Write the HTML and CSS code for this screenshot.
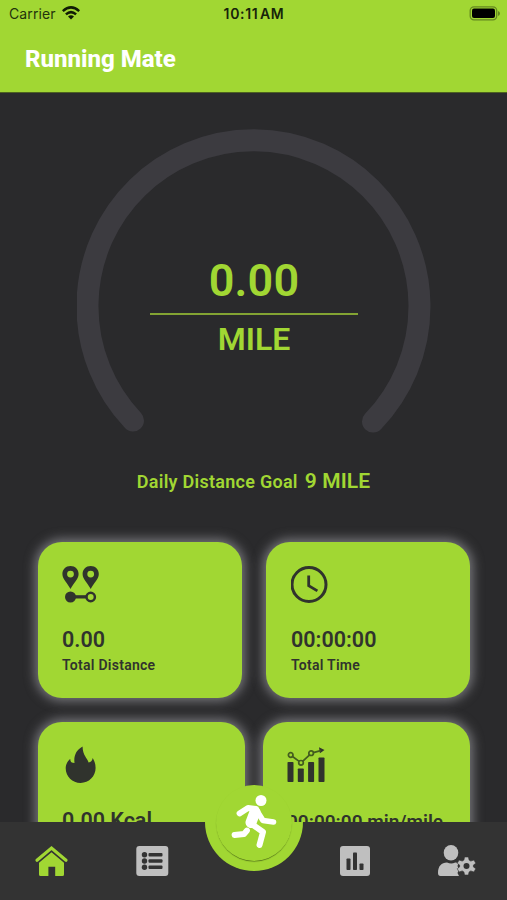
FILE: index.html
```
<!DOCTYPE html>
<html lang="en">
<head>
<meta charset="utf-8">
<title>Running Mate</title>
<link rel="stylesheet" href="styles.css">
</head>
<body>
<div class="app">
  <header class="header">
    <div class="status">
      <div class="carrier"><span>Carrier</span>
        <svg class="wifi" viewBox="0 0 18 14"><g fill="none" stroke="#111d05" stroke-width="2.5"><path d="M.8 5.2Q9-2.500 17.2 5.2"/><path d="M3.9 8.4Q9 3.8 14.1 8.4"/></g><path d="M6 10.5Q9 8 12 10.5L9 13.6Z" fill="#111d05"/></svg>
      </div>
      <div class="clock">10:11 AM</div>
      <svg class="battery" viewBox="0 0 32 15"><rect x="1.2" y=".8" width="26.5" height="13" rx="3.8" fill="none" stroke="#658820" stroke-width="1.3"/><rect x="3" y="2.6" width="23" height="9.4" rx="2" fill="#000"/><path d="M29 5v5q2-.8 2-2.500T29 5Z" fill="#658820"/></svg>
    </div>
    <h1 class="title">Running Mate</h1>
  </header>

  <main class="main">
    <section class="gauge">
      <svg class="arc" viewBox="0 0 356 306"><path d="M56 292.500A166 166 0 1 1 296 293.500" fill="none" stroke="#3c3b40" stroke-width="22" stroke-linecap="round"/></svg>
      <div class="reading">
        <div class="amount">0.00</div>
        <div class="rule"></div>
        <div class="unit">MILE</div>
      </div>
    </section>
    <div class="goal"><span>Daily Distance Goal</span><strong>9 MILE</strong></div>
    <section class="row">
      <article class="card">
        <svg class="icon" viewBox="0 0 38 38"><g fill="#30332d" fill-rule="evenodd"><path d="M8.500 1C3.800 1 .4 4.500.4 8.900c0 5.300 5.200 9 8.100 15.100 2.900-6.100 8.100-9.800 8.100-15.100C16.600 4.500 13.200 1 8.500 1Zm0 4.700a3.400 3.400 0 1 1 0 6.800 3.400 3.400 0 0 1 0-6.800Z"/><path d="M28.700 1c-4.700 0-8.100 3.500-8.100 7.900 0 5.300 5.200 9 8.100 15.100 2.900-6.100 8.100-9.800 8.100-15.100C36.800 4.500 33.400 1 28.700 1Zm0 4.700a3.400 3.400 0 1 1 0 6.800 3.400 3.400 0 0 1 0-6.800Z"/><circle cx="8.500" cy="32" r="5.500"/><path d="M12 30.200h12v3.300H12z"/></g><circle cx="28.700" cy="32" r="4.200" fill="none" stroke="#30332d" stroke-width="2.500"/></svg>
        <div class="value">0.00</div><div class="label">Total Distance</div>
      </article>
      <article class="card card-time">
        <svg class="icon" viewBox="0 0 38 38"><g fill="none" stroke="#30332d"><circle cx="18" cy="19.500" r="17" stroke-width="3"/><path d="M17.700 10.500v10.200l8.700 5.200" stroke-width="2.800"/></g></svg>
        <div class="value">00:00:00</div><div class="label">Total Time</div>
      </article>
    </section>
    <section class="row row-wide">
      <article class="card">
        <svg class="icon" viewBox="0 0 38 38"><path d="M20.600 1.500C14.500 4.700 11.500 10.500 12.500 18 9.600 18 8 16.500 8.300 13.800 5.200 16.500 3.700 20 3.700 23.200c0 8.200 6.700 14.700 14.900 14.700s15-6.500 15-14.900c0-4.300-1.400-7.600-3-10.100.1 2.300-1.500 4.400-4 4.500-1.400-4.500-6.100-7.500-6-15.900Z" fill="#30332d"/></svg>
        <div class="value kcal">0.00 Kcal</div><div class="label">Total Calories</div>
      </article>
      <article class="card">
        <svg class="icon" viewBox="0 0 38 38"><g fill="#30332d" transform="translate(.5 1)"><rect x="0" y="16" width="6" height="20" rx=".8"/><rect x="10.300" y="22.500" width="6" height="13.500" rx=".8"/><rect x="20.600" y="16" width="6" height="20" rx=".8"/><rect x="31" y="11.500" width="6" height="24.500" rx=".8"/><path d="m31.500 1.300 5.500 2.700-4.600 3.300Z"/></g><g fill="none" stroke="#435c1f" stroke-width="1.700" transform="translate(.5 1)"><circle cx="3.200" cy="9" r="2.300"/><circle cx="13.500" cy="16.800" r="2.300"/><circle cx="23.600" cy="7.200" r="2.300"/><path d="m5 10.500 6.700 4.900m3.400-.1 7-6.500m3.700-2.200 7.400-2"/></g></svg>
        <div class="value pace">00:00:00 min/mile</div><div class="label">Avg. Pace</div>
      </article>
    </section>
  </main>

  <nav class="nav">
    <svg class="nav-icon" viewBox="0 0 40 36"><path d="M6 17.300 20.500 5 35 17.300" fill="none" stroke="#a1d733" stroke-width="3.200" stroke-linecap="round"/><path d="M20.500 9.300 33 19.800v11.700q0 1.500-1.500 1.500h-7.300v-9.200h-6.800V33H9.500Q8 33 8 31.500V19.800Z" fill="#a1d733"/></svg>
    <svg class="nav-icon" viewBox="0 0 40 36"><rect x="3.300" y="3" width="32" height="30" rx="3" fill="#bfbfbf"/><g fill="#333"><circle cx="11.500" cy="11.700" r="2.700"/><circle cx="11.500" cy="18" r="2.700"/><circle cx="11.500" cy="24.300" r="2.700"/><rect x="15.500" y="10" width="14" height="3.400" rx="1"/><rect x="15.500" y="16.300" width="14" height="3.400" rx="1"/><rect x="15.500" y="22.600" width="14" height="3.400" rx="1"/></g></svg>
    <div class="run-slot"><div class="run-rim"></div><div class="run-button">
      <svg class="runner" viewBox="0 0 50 56"><circle cx="32" cy="6.500" r="5.500" fill="#fff"/><g fill="none" stroke="#fff" stroke-linecap="round" stroke-linejoin="round"><path d="M10.500 19.500 19 14 27 15" stroke-width="5.800"/><path d="m28 17 6 9.500L44.500 28" stroke-width="5.600"/><path d="m26 18-4 10.500" stroke-width="11"/><path d="m22 29.500 12 8.500-3.500 13" stroke-width="6"/><path d="m18 36.500-3 3.500-9.500 1" stroke-width="5.800"/></g></svg>
    </div></div>
    <svg class="nav-icon" viewBox="0 0 40 36"><rect x="6" y="3" width="30" height="30" rx="3" fill="#bfbfbf"/><g fill="#333"><rect x="12.500" y="15.500" width="4" height="11.500" rx=".8"/><rect x="19" y="9.500" width="4" height="17.500" rx=".8"/><rect x="25.500" y="20.500" width="4" height="6.500" rx=".8"/></g></svg>
    <svg class="nav-icon" viewBox="0 0 40 36"><g fill="#bfbfbf"><ellipse cx="15" cy="9.800" rx="7.300" ry="7.800"/><path d="M2 30c0-7 3.500-10.500 9-10.500 3 1.300 5.500 1.300 8.300 0l3.200.6-1 3 1.500 3.500-1.500 3.300 1.500 3H4.500Q2 32.900 2 30Z"/></g><g transform="translate(30.500 23)"><path d="M-1.900-9h3.800l.7 3.100 1.700 1L7.400-6l1.900 3.300L6.900-.9v1.800l2.400 1.800L7.400 6l-3.100-1.100-1.700 1L1.900 9h-3.800l-.7-3.100-1.700-1L-7.400 6l-1.900-3.300 2.400-1.800V-.9l-2.400-1.800L-7.400-6l3.100 1.100 1.700-1Z" fill="#bfbfbf" stroke="#333" stroke-width=".6"/><circle r="3" fill="#333"/></g></svg>
  </nav>
</div>
</body>
</html>
```

FILE: styles.css
```
* { box-sizing: border-box; }
body { margin: 0; background: #2a2a2c; font-family: Roboto, "Liberation Sans", sans-serif; }
.app { position: relative; width: 507px; height: 900px; overflow: hidden; display: flex; flex-direction: column; }
svg { display: block; flex: none; }

.header { height: 93px; flex: none; background: #a1d733; border-bottom: 1px solid #4d6220; }
.status { height: 27px; display: grid; grid-template-columns: 1fr auto 1fr; align-items: center; padding: 1px 6px 0 9px; font-family: Inter, sans-serif; color: #23330c; }
.carrier { display: flex; align-items: center; gap: 6px; font-size: 14px; letter-spacing: 0.1px; }
.carrier span { margin-top: -1px; }
.wifi { width: 18px; height: 14px; margin-top: -2px; }
.clock { margin: -1px 0 0 -2px; font-size: 14px; font-weight: 600; color: #17240a; word-spacing: -2.5px; letter-spacing: 0.65px; }
.battery { width: 32px; height: 15px; justify-self: end; margin-top: -1px; }
.title { margin: 17px 0 0 25px; font-size: 24px; line-height: 30px; font-weight: 800; color: #fff; }

.main { flex: 1; }
.gauge { width: 356px; height: 306px; margin: 35px auto 0; display: grid; justify-items: center; padding-left: 1px; }
.arc { grid-area: 1 / 1; width: 356px; height: 306px; }
.reading { grid-area: 1 / 1; width: 208px; margin-right: 1px; padding-top: 125px; color: #a1d733; text-align: center; font-weight: 600; }
.amount { height: 60px; font-size: 45px; line-height: 56px; letter-spacing: 0.2px; }
.rule { height: 2px; background: #83a333; }
.unit { font-size: 32px; line-height: 48px; }
.goal { display: flex; justify-content: center; align-items: center; gap: 7px; height: 30px; margin-top: 32px; color: #a1d733; font-size: 18px; font-weight: 600; letter-spacing: 0.27px; }
.goal strong { font-size: 21px; font-weight: 600; letter-spacing: 0.1px; }

.row { display: grid; grid-template-columns: repeat(2, minmax(0, 1fr)); gap: 24px; margin: 46px 37px 24px 38px; }
.row-wide { gap: 18px; margin-top: 0; }
.card { height: 156px; padding: 23px 24px; border-radius: 24px; background: #a1d733; color: #30332d; box-shadow: 0 0 11px 3px #77777b; white-space: nowrap; }
.card-time { padding-left: 25px; }
.icon { width: 38px; height: 38px; }
.value { margin-top: 23px; font-size: 21.5px; line-height: 28px; font-weight: 600; }
.kcal { line-height: 30px; }
.pace { font-size: 19px; line-height: 31px; }
.label { font-size: 14px; line-height: 22px; font-weight: 600; letter-spacing: 0.27px; }

.nav { position: absolute; left: 0; right: 0; bottom: 0; height: 78px; background: #333; display: grid; grid-template-columns: 102px 102px 1fr 102px 102px; justify-items: center; padding-top: 21px; }
.nav-icon { width: 40px; height: 36px; }
.run-slot { position: relative; width: 98px; height: 49px; margin-top: -21px; }
.run-rim { height: 49px; border-radius: 0 0 49px 49px; background: #a1d733; }
.run-button { position: absolute; left: 11px; top: -37px; width: 76px; height: 76px; border-radius: 50%; background: #a1d733; box-shadow: 0 1px 1px -0.500px #4e6c18; }
.runner { width: 50px; height: 56px; margin: 9px 0 0 13px; }
```
